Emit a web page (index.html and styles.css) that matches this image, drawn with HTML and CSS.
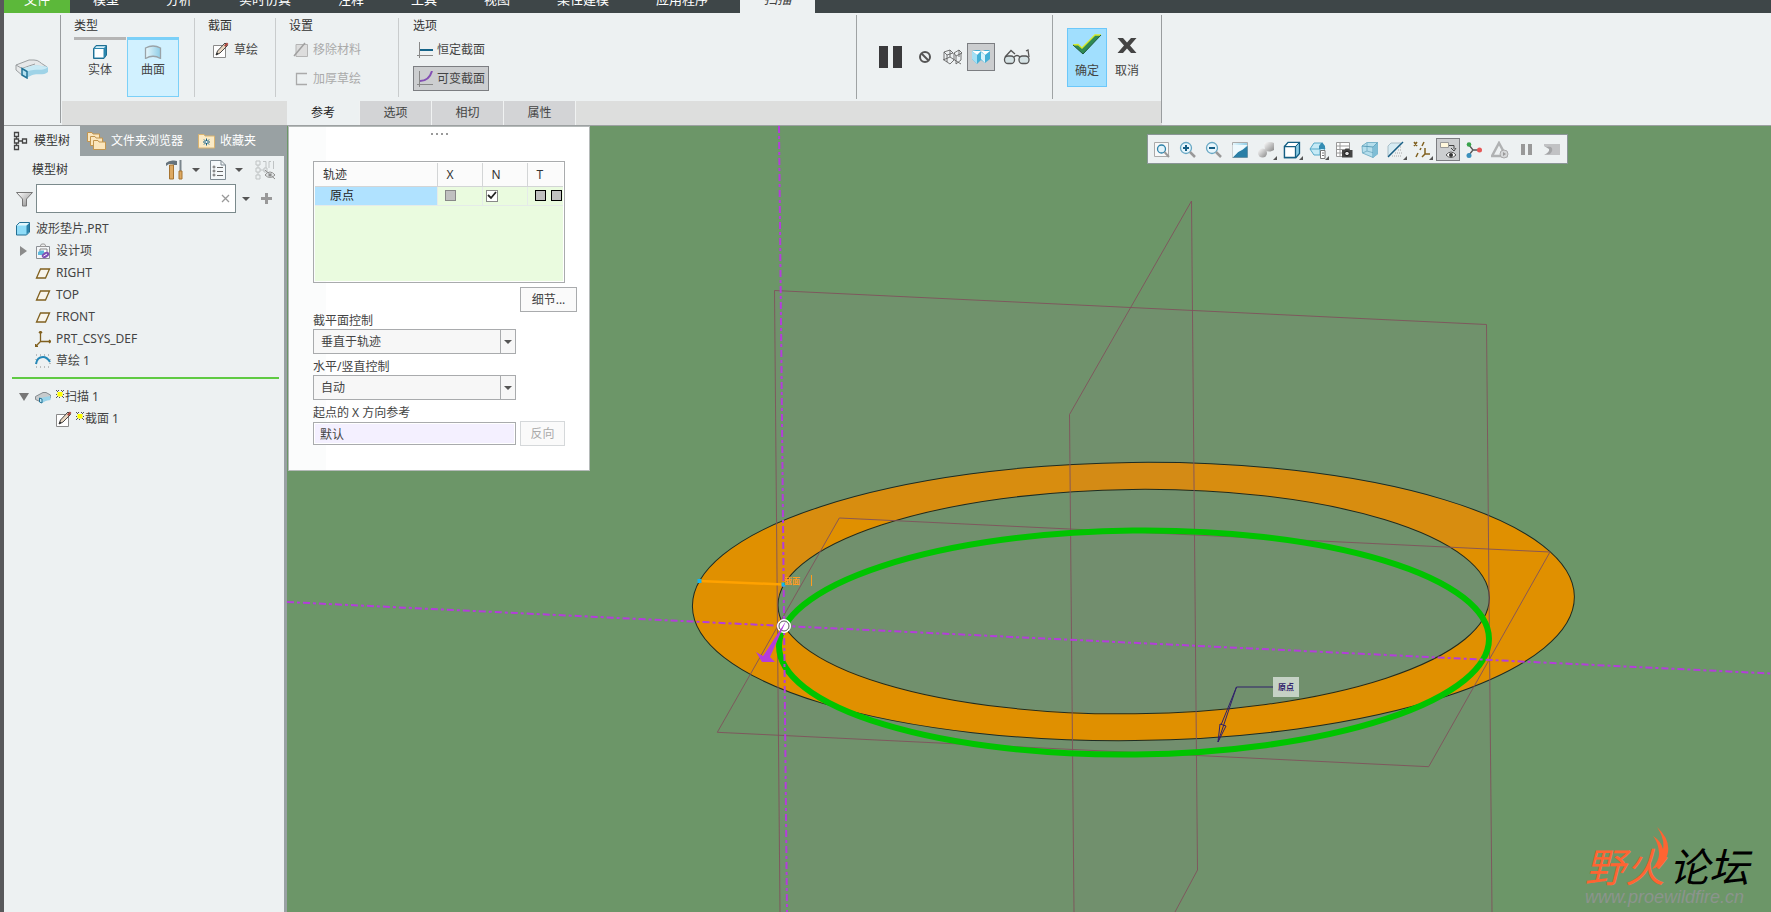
FILE: index.html
```html
<!DOCTYPE html>
<html lang="zh-CN">
  <head>
    <title>波形垫片.PRT</title>
    <meta charset="UTF-8">
    <link rel="stylesheet" href="styles.css">
  </head>
  <body>
    <!-- shared icons -->
    <svg class="defs" width="0" height="0">
      <defs>
        <linearGradient id="blue" x1="0" y1="0" x2="1" y2="0"><stop offset="0" stop-color="#e8f8fd"/><stop offset="1" stop-color="#8fcde6"/></linearGradient>
        <linearGradient id="grey" x1="0" y1="0" x2="1" y2="1"><stop offset="0" stop-color="#fff"/><stop offset="1" stop-color="#888"/></linearGradient>
        <symbol id="plane" viewBox="0 0 16 16"><path d="M5.500 4H14.500L10.500 13H1.500Z" fill="#f8f5ec" stroke="#80601f" stroke-width="1.300"/></symbol>
        <symbol id="sketch" viewBox="0 0 18 18">
          <path d="M1.500 4.500H13.500V16.500H1.500Z" fill="#fff" stroke="#8a8a8a"/>
          <path d="M13 2L15.500 4.500L8 12L4 14L5.500 10Z" fill="#e9d6c0" stroke="#444"/>
          <path d="M13.500 3L15 4.500" stroke="#a8443c" stroke-width="4"/>
          <path d="M4 14L5 11.500L6.500 13Z" fill="#222"/>
        </symbol>
        <symbol id="sweep" viewBox="0 0 34 20">
          <path d="M1 6L14 1H19C24 1 25 4 29 6L32 8L12 12L8 17L1 11Z" fill="#e6e8e9" stroke="#9b9fa1"/>
          <path d="M1 6L7 9.500L14 7L20 5" fill="none" stroke="#9b9fa1"/>
          <path d="M12 11.500L17 8C20 5 27 7 33 8V13C27 18 21 12 12 19Z" fill="#9fd3e7"/>
          <path d="M7 9.500L16 7C20 5 27 7 33 8C28 13 21 9 12 12.500Z" fill="#c9eaf5"/>
          <path d="M7 9.500L12 12.500V19L7 16Z" fill="#b4e0ef" stroke="#237396" stroke-width="1.500"/>
        </symbol>
        <symbol id="sweep-small" viewBox="0 0 16 16">
          <path d="M.500 7.500L8 3.500H11L15.500 6V9L6 13L.500 10.500Z" fill="#c7cbcd" stroke="#868c90"/>
          <path d="M5 9L15.500 7V11Q11 11 7 14L5 13Z" fill="#9ad4ea"/>
          <path d="M4.500 9L7 10V14L4.500 13Z" fill="#c4e9f5" stroke="#237396"/>
        </symbol>
        <symbol id="star" viewBox="0 0 8 8"><path d="M1.500 2H6.500V6.500H1.500Z" fill="#ff0"/><path d="M0 0H1V1H0ZM2 0H3V1H2ZM5 0H6V1H5ZM7 0H8V1H7ZM1 1H2V2H1ZM6 1H7V2H6ZM0 4H1V5H0ZM7 4H8V5H7ZM1 6H2V7H1ZM6 6H7V7H6ZM0 7H1V8H0ZM3 7H4V8H3ZM7 7H8V8H7Z" fill="#555"/></symbol>
        <symbol id="down" viewBox="0 0 8 4"><path d="M0 0H8L4 4Z" fill="#555"/></symbol>
        <symbol id="corner" viewBox="0 0 4 4"><path d="M4 0V4H0Z" fill="#555"/></symbol>
      </defs>
    </svg>

    <nav class="menubar">
      <button class="file">文件</button>
      <div class="menus">
        <button>模型</button>
        <button>分析</button>
        <button>实时仿真</button>
        <button>注释</button>
        <button>工具</button>
        <button>视图</button>
        <button>柔性建模</button>
        <button>应用程序</button>
      </div>
      <button class="current">扫描</button>
    </nav>

    <header class="ribbon">
      <div class="feature"><svg width="34" height="20"><use href="#sweep"/></svg></div>
      <div class="dashboard">
        <div class="groups">
          <section class="group type">
            <h2>类型</h2>
            <div class="big-row">
              <button class="big">
                <svg width="14" height="14"><path d="M.500 3.500L3 .500H13.500V10L11 13.500H.500Z" fill="#2b86ae" stroke="#1f6f93"/><path d="M1.500 4H10.500V12.500H1.500Z" fill="#fff"/><path d="M2 3L3.500 1.200H12.500L11 3Z" fill="#d6f0fa"/></svg>
                实体
              </button>
              <button class="big on">
                <svg width="18" height="14"><path d="M1.500 3Q9 -1 16.500 3V13.500Q9 9 1.500 13.500Z" fill="url(#blue)" stroke="#9aa3a8" stroke-width="1.300"/></svg>
                曲面
              </button>
            </div>
          </section>
          <section class="group section">
            <h2>截面</h2>
            <button class="cmd"><svg width="18" height="18"><use href="#sketch"/></svg>草绘</button>
          </section>
          <section class="group setting">
            <h2>设置</h2>
            <button class="cmd" disabled><svg width="16" height="16"><path d="M3 2.500H14.500V14.500H3Z" fill="#ddd" stroke="#b5b5b5"/><path d="M1 14L12 1" stroke="#a0a0a0" stroke-width="1.500"/></svg>移除材料</button>
            <button class="cmd" disabled><svg width="16" height="16"><path d="M14 2.500H3.500V13.500H14" fill="none" stroke="#aaa" stroke-width="1.300"/></svg>加厚草绘</button>
          </section>
          <section class="group option">
            <h2>选项</h2>
            <button class="cmd"><svg width="16" height="16"><path d="M2.500 0V16M0 13.500H16" stroke="#888"/><path d="M3 8H16" stroke="#156489" stroke-width="2"/></svg>恒定截面</button>
            <button class="cmd on"><svg width="16" height="16"><path d="M2.500 0V16M0 13.500H16" stroke="#888"/><path d="M3 10Q12 10 15 0" fill="none" stroke="#8450b5" stroke-width="2"/></svg>可变截面</button>
          </section>
          <div class="preview">
            <button class="pause" aria-label="暂停"><svg width="23" height="22"><path d="M0 0H9V22H0ZM14 0H23V22H14Z" fill="#3a3a3c"/></svg></button>
            <button class="none" aria-label="无预览"><svg width="12" height="12" fill="none" stroke="#555" stroke-width="2"><circle cx="6" cy="6" r="5"/><path d="M2.500 2.500L9.500 9.500"/></svg></button>
            <button aria-label="分离"><svg width="20" height="16" fill="none" stroke="#555"><path d="M1 3L7 1L10 4L4 6ZM4 6V13L7 15L11 11V4M1 3V11L4 13M11 4L16 1L19 4L13 7ZM13 7V15L18 11V4M0 11L7 8L18 15M7 1V8M16 1V8" stroke-width=".8"/></svg></button>
            <button class="on" aria-label="连接"><svg width="18" height="14"><path d="M0 1L4 0H8L9 2L13 0H17L18 1V9L13 13L9 10L5 14L0 9Z" fill="#45b0d6"/><path d="M0 1H9L5 5ZM9 1H18L13 5Z" fill="#fff"/><path d="M0 1L5 5V14L0 9Z" fill="#a5e0f5"/><path d="M9 2L13 5V13L9 9Z" fill="#d8f3fb"/></svg></button>
            <button class="verify" aria-label="校验"><svg width="28" height="16" fill="#d5e2e4" stroke="#555"><rect x="1.500" y="7" width="10" height="7.500" rx="3.500" stroke-width="1.300"/><rect x="16" y="7" width="10" height="7.500" rx="3.500" stroke-width="1.300"/><path d="M2 8L8 1.500L12 5M11 8Q14 5 17 8M26 8L25 1L23 2" fill="none" stroke-width="1.300"/></svg></button>
          </div>
          <div class="finish">
            <button class="ok"><svg width="30" height="22"><path d="M1 11L6 10.500L10 14L23 1H29L11 20Z" fill="#2f8a55"/><path d="M1 11L6 10.500L10 14L23 1H29" fill="none" stroke="#d6ea2a" stroke-width="1.300"/><path d="M1 11L11 20L29 1" fill="none" stroke="#1c5a3c"/></svg>确定</button>
            <button><svg width="20" height="22"><path d="M.500 4H6L10 8.500L14 4H19.500L13 11.500L19.500 19H14L10 14.500L6 19H.500L7 11.500Z" fill="#444"/></svg>取消</button>
          </div>
        </div>
        <div class="tabs">
          <button class="active">参考</button>
          <button>选项</button>
          <button>相切</button>
          <button>属性</button>
        </div>
      </div>
    </header>

    <main class="work">
      <aside class="navigator">
        <div class="nav-tabs">
          <button class="active"><svg width="15" height="20" fill="none" stroke="#444" stroke-width="1.300"><path d="M1.500 1.500H5.500V5.500H1.500ZM1.500 8H5.500V12H1.500ZM1.500 14.500H5.500V18.500H1.500ZM9.500 8H13.500V12H9.500ZM3.500 5.500V8M3.500 12V14.500M5.500 10H9.500"/></svg>模型树</button>
          <button><svg width="20" height="20" fill="#fbe6bd" stroke="#c2954f"><path d="M.500 1.500H5L6 3H12.500V10.500H.500Z"/><path d="M3.500 5.500H8L9 7H15.500V14.500H3.500Z"/><path d="M6.500 9.500H11L12 11H18.500V18.500H6.500Z"/></svg>文件夹浏览器</button>
          <button><svg width="18" height="16"><path d="M.500 1.500H6L7 3H16.500V15H.500Z" fill="#fbeac5" stroke="#d9b370"/><path d="M8.500 5.500V12.500M5 9H12M6 6.500L11 11.500M11 6.500L6 11.500" stroke="#0f5d86"/><circle cx="8.500" cy="9" r="1" fill="#fff"/></svg>收藏夹</button>
        </div>
        <div class="tree-head">
          <h2>模型树</h2>
          <button aria-label="设置"><svg width="18" height="20"><path d="M0 3Q3 0 8 .500L11 1V5H8L6 4H3L0 6Z" fill="#66737c"/><path d="M3.500 5H7.500V19H3.500Z" fill="#dda962" stroke="#a77431"/><path d="M14.500 0V11" stroke="#7a858c" stroke-width="2"/><path d="M13 11H16V19H13Z" fill="#dda962" stroke="#a77431"/></svg><svg width="8" height="4"><use href="#down"/></svg></button>
          <button aria-label="显示"><svg width="17" height="20"><path d="M.500 .500H11L15.500 5V19.500H.500Z" fill="#f4f8fa" stroke="#7e8a92"/><path d="M11 .500V5H15.500" fill="none" stroke="#7e8a92"/><g fill="none" stroke="#666"><circle cx="4" cy="7" r="1"/><circle cx="4" cy="11" r="1"/><circle cx="4" cy="15" r="1"/><path d="M7 7.500H13M7 11.500H13M7 15.500H13"/></g></svg><svg width="8" height="4"><use href="#down"/></svg></button>
          <button aria-label="隐藏" disabled><svg width="21" height="20" fill="none" stroke="#bfc3c4"><path d="M1 1H5V5H1ZM1 8H5V12H1ZM1 15H5V19H1ZM3 5V8M3 12V15M5 10H9M9 8H12V12H9ZM8 1.500H11V8M14 1.500V8M18.500 1V9M14 1.500H16"/><path d="M10 15Q15 9 20 15Q15 20 10 15ZM10 10L20 19" stroke="#8c8c8c"/><circle cx="15" cy="15" r="2" fill="#8c8c8c"/></svg></button>
        </div>
        <div class="filter">
          <svg width="17" height="16"><path d="M.500 1.500H16.500L10.500 8V15H6.500V8Z" fill="url(#grey)" stroke="#777"/></svg>
          <div class="search">
            <input type="text" aria-label="过滤">
            <button aria-label="清除"><svg width="9" height="9"><path d="M1 1L8 8M8 1L1 8" stroke="#999" stroke-width="1.300"/></svg></button>
          </div>
          <svg width="8" height="4"><use href="#down"/></svg>
          <button aria-label="添加"><svg width="11" height="11"><path d="M5.500 0V11M0 5.500H11" stroke="#999" stroke-width="3"/></svg></button>
        </div>
        <ul class="tree">
          <li><svg width="14" height="14"><path d="M.500 3.500L3.500 .500H13.500V10L10.500 13H.500Z" fill="#8fdcf8" stroke="#236f94"/><path d="M10.500 3.500L13 1V10L10.500 12.500Z" fill="#2d83ab"/><path d="M1 3.500L4 1H13L10.500 3.500Z" fill="#e2f7fd"/></svg>波形垫片.PRT</li>
          <li class="sub"><svg class="arrow" width="9" height="10"><path d="M1 0L8 5L1 10Z" fill="#8b8b8b"/></svg><svg width="16" height="16"><path d="M1.500 3.500H14.500V15.500H1.500Z" fill="#f4f6f8" stroke="#8b8f94"/><path d="M5 3.500L6.500 1H9.500L11 3.500Z" fill="#eee" stroke="#999"/><path d="M5 6H12V10H5Z" fill="#fff" stroke="#888"/><path d="M3 9L6 7.500H9V12H3Z" fill="#5db9dd"/><ellipse cx="10.500" cy="12" rx="4" ry="2.500" fill="#7e4fb5" transform="rotate(-30 10.500 12)"/><path d="M8.500 13L12 11" stroke="#fff"/></svg>设计项</li>
          <li class="sub"><svg width="16" height="16"><use href="#plane"/></svg>RIGHT</li>
          <li class="sub"><svg width="16" height="16"><use href="#plane"/></svg>TOP</li>
          <li class="sub"><svg width="16" height="16"><use href="#plane"/></svg>FRONT</li>
          <li class="sub"><svg width="16" height="16" fill="none" stroke="#80601f" stroke-width="1.300"><path d="M5.500 0V10.500H16M5.500 10.500L.500 15.500M4 2L5.500 0L7 2M14 9L16 10.500L14 12M.500 13V15.500H3"/></svg>PRT_CSYS_DEF</li>
          <li class="sub"><svg width="16" height="16" fill="none"><path d="M1 2H15M1 14H15M1 6V12M15 6V12" stroke="#888" stroke-dasharray="1 3"/><path d="M1 11Q2 4 8 4Q12 4 15 9" stroke="#2488b8" stroke-width="2"/></svg>草绘 1</li>
          <li class="insert"></li>
          <li class="sub"><svg class="arrow" width="10" height="8"><path d="M0 0H10L5 8Z" fill="#777"/></svg><svg width="16" height="16"><use href="#sweep-small"/></svg><span class="new"><svg width="8" height="8"><use href="#star"/></svg>扫描 1</span></li>
          <li class="leaf"><svg width="18" height="18"><use href="#sketch"/></svg><span class="new"><svg width="8" height="8"><use href="#star"/></svg>截面 1</span></li>
        </ul>
      </aside>

      <div class="canvas">
        <svg class="scene" viewBox="287 126 1484 786" preserveAspectRatio="xMidYMid slice">
          <defs>
            <clipPath id="near"><path d="M839 518L1550 552H1600V800H690V620H782Z"/></clipPath>
          </defs>
          <rect x="287" y="126" width="1484" height="786" fill="#6c9668"/>
          <g id="washer">
            <path fill="#e09000" stroke="none" fill-rule="evenodd" d="M692.400 606.500A441 139 -.65 0 1 1574.400 596.500A441 139 -.65 0 1 692.400 606.500ZM778 605.500A355.700 112 -.63 0 1 1489.400 597.700A355.700 112 -.63 0 1 778 605.500Z"/>
          </g>
          <g fill="#907890" fill-opacity=".1">
            <path d="M774.500 290.500L1486.500 324.500L1492 912H780Z"/>
            <path d="M1191.500 201L1069.500 414.500L1074 912H1175L1197.500 870Z" fill-opacity=".05"/>
            <path d="M839.300 518L1550 552L1428.700 766.700L717.300 732.300Z" fill-opacity=".05"/>
          </g>
          <use href="#washer" clip-path="url(#near)"/>
          <g fill="none" stroke="#1d2b22">
            <ellipse cx="1133.400" cy="601.500" rx="441" ry="139.100" transform="rotate(-.65 1133.400 601.500)"/>
            <ellipse cx="1133.700" cy="601.600" rx="355.700" ry="112.200" transform="rotate(-.63 1133.700 601.600)"/>
          </g>
          <g fill="none" stroke="#80525c" stroke-opacity=".9">
            <path d="M780 912L774.500 290.500L1486.500 324.500L1492 912"/>
            <path d="M1074 912L1069.500 414.500L1191.500 201L1197.500 870L1175 912"/>
            <path d="M839.300 518L1550 552L1428.700 766.700L717.300 732.300Z"/>
          </g>
          <ellipse cx="1134" cy="642.500" rx="355" ry="112" transform="rotate(-.63 1134 642.500)" fill="none" stroke="#00c400" stroke-width="6"/>
          <g stroke="#b43ddb" stroke-width="2" stroke-dasharray="7 3 3 3">
            <path d="M779 126L787 912"/>
            <path d="M287 602L1771 673.500"/>
          </g>
          <path d="M699.500 581L783.500 584.500" stroke="#ffa200" stroke-width="2.500"/>
          <path d="M697.500 579H701.500V583H697.500ZM781.500 582.500H785.500V586.500H781.500Z" fill="#16b4ee"/>
          <text class="tag section-tag" x="784" y="584">截面</text>
          <path d="M811.500 575V586" stroke="#ff9c1e"/>
          <circle cx="784" cy="626" r="6.500" fill="#fff" stroke="#fff"/>
          <circle cx="784" cy="626" r="5" fill="#fff" stroke="#555"/>
          <path d="M786 621L770 657L775 662L762 662L756 652L763 656Z" fill="#b43ddb"/>
          <path d="M1273 687H1236.500L1221 725M1218 742L1220 724L1226 726ZM1236.500 687L1218 742" fill="none" stroke="#30206a"/>
          <rect x="1273" y="677" width="26" height="20" fill="#c5d2c5"/>
          <text class="tag origin-tag" x="1278" y="690">原点</text>
        </svg>

        <form class="slide-panel">
          <div class="grip"><i></i><i></i><i></i><i></i></div>
          <div class="list">
            <table>
              <colgroup><col class="c-name"><col class="c-x"><col class="c-n"><col class="c-t"></colgroup>
              <tr><th>轨迹</th><th>X</th><th>N</th><th>T</th></tr>
              <tr>
                <td class="picked">原点</td>
                <td><input type="checkbox" class="off" aria-label="X" disabled></td>
                <td><label class="tick"><input type="checkbox" aria-label="N" checked><svg width="10" height="9"><path d="M1 4L4 7L9 1" fill="none" stroke="#222" stroke-width="1.800"/></svg></label></td>
                <td><input type="checkbox" class="dark" aria-label="T 1" disabled><input type="checkbox" class="dark" aria-label="T 2" disabled></td>
              </tr>
            </table>
          </div>
          <div class="row end"><button type="button" class="details">细节...</button></div>
          <label for="plane-control">截平面控制</label>
          <div class="select"><select id="plane-control"><option>垂直于轨迹</option></select></div>
          <label for="vertical-control">水平/竖直控制</label>
          <div class="select"><select id="vertical-control"><option>自动</option></select></div>
          <label for="x-direction">起点的 X 方向参考</label>
          <div class="row"><input id="x-direction" type="text" value="默认"><button type="button" disabled>反向</button></div>
        </form>

        <div class="viewbar">
          <button aria-label="重新调整"><svg width="18" height="18"><path d="M1.500 1.500H15.500V15.500H1.500Z" fill="#f8f8f8" stroke="#aaa"/><circle cx="8.500" cy="8" r="4" fill="#e3f3fa" stroke="#2f83aa" stroke-width="1.300"/><path d="M11.500 11L16 16" stroke="#999" stroke-width="2"/></svg></button>
          <button aria-label="放大"><svg width="18" height="18"><circle cx="7" cy="7" r="5.500" fill="#e8f6fc" stroke="#68a8c4" stroke-width="1.300"/><path d="M7 4V10M4 7H10" stroke="#165f86" stroke-width="2"/><path d="M11 11L16 16" stroke="#999" stroke-width="2.500"/></svg></button>
          <button aria-label="缩小"><svg width="18" height="18"><circle cx="7" cy="7" r="5.500" fill="#e8f6fc" stroke="#68a8c4" stroke-width="1.300"/><path d="M4 7H10" stroke="#165f86" stroke-width="2"/><path d="M11 11L16 16" stroke="#999" stroke-width="2.500"/></svg></button>
          <button aria-label="重画"><svg width="18" height="18"><path d="M1.500 1.500H16.500V16.500H1.500Z" fill="url(#blue)" stroke="#aaa"/><path d="M1.500 16.500L7 11Q12 9 16.500 5V16.500Z" fill="#2b7fa6"/><path d="M1.500 4V16.500L7 11Q12 9 16.500 4Z" fill="#eef9fd"/></svg></button>
          <button aria-label="渲染"><svg width="18" height="18"><path d="M7 2Q12 0 17 2V9Q12 12 8 9Z" fill="url(#grey)"/><circle cx="5.500" cy="12" r="4.500" fill="url(#grey)"/></svg><svg class="more" width="4" height="4"><use href="#corner"/></svg></button>
          <button aria-label="显示样式"><svg width="18" height="18"><path d="M1.500 5.500L5 1.500H16.500V12.500L13 16.500H1.500Z" fill="#8bcde6" stroke="#155f84" stroke-width="1.300"/><path d="M1.500 5.500H12.500V16.500H1.500Z" fill="#fff" stroke="#155f84" stroke-width="1.300"/><path d="M3 5L5.500 2H15L12.500 5Z" fill="#fff"/><path d="M12.500 5.500L16.500 1.500" stroke="#155f84"/></svg><svg class="more" width="4" height="4"><use href="#corner"/></svg></button>
          <button aria-label="已保存方向"><svg width="18" height="18"><path d="M1 8L5 2H12L16 7L13 14H5Z" fill="#c6eaf6" stroke="#57a9c8"/><path d="M1 8H11V14" fill="none" stroke="#57a9c8"/><path d="M10 8V5L13 1L16 5V8Z" fill="#348cb3"/><path d="M11.500 9.500H16V17.500H11.500Z" fill="#fff" stroke="#777"/><path d="M13 12H15M13 14.500H15" stroke="#777"/></svg><svg class="more" width="4" height="4"><use href="#corner"/></svg></button>
          <button aria-label="视图管理器"><svg width="18" height="18"><path d="M1.500 1.500H14.500V15.500H1.500ZM1.500 5H14.500M1.500 8.500H14.500M1.500 12H14.500M5 1.500V15.500" fill="#fff" stroke="#999"/><path d="M7 9H9.500L10.500 7.500H14L15 9H17.500V16.500H7Z" fill="#444"/><circle cx="12" cy="12.500" r="2.300" fill="#ddd" stroke="#111"/></svg></button>
          <button aria-label="透视图"><svg width="18" height="18"><path d="M1 5L6 1.500H16.500V13L12 16.500L1.500 12Z" fill="#b5deec" stroke="#7bb4ca"/><path d="M6 1.500V10L1.500 12M6 10L16.500 13" fill="none" stroke="#7bb4ca"/><path d="M1 5L12 6L16.500 1.500M12 6V16.500" fill="none" stroke="#5c9fba"/><path d="M12 6L16.500 2V13L12 16.500Z" fill="#7fbdd5"/></svg></button>
          <button aria-label="截面"><svg width="18" height="18"><path d="M1 5L4 2H14L1 15Z" fill="#d6ebf3" stroke="#a8bec8"/><path d="M1 16L16 1" stroke="#175f86" stroke-width="1.500"/><path d="M5 15H15M8 12H15M11 9H15M13 6H15" stroke="#aaa" stroke-dasharray="1 1"/></svg><svg class="more" width="4" height="4"><use href="#corner"/></svg></button>
          <button aria-label="基准显示"><svg width="18" height="18" fill="none" stroke="#80601f" stroke-width="1.500"><path d="M1 1L4 5M4 1L1 5M11 1L9 5M8 7L7 9M5 12L3 16M12 7V13H17M12 13L9 16"/></svg><svg class="more" width="4" height="4"><use href="#corner"/></svg></button>
          <button class="on" aria-label="注释显示"><svg width="18" height="18"><path d="M1.500 1.500H9.500V6.500H1.500Z" fill="#fff7dc" stroke="#999"/><path d="M10 4.500H15V8M12 7L15 10L17 7" fill="none" stroke="#444"/><path d="M7 14Q12 8 17 14Q12 19 7 14Z" fill="#fff" stroke="#555"/><circle cx="12" cy="14" r="2" fill="#333"/></svg></button>
          <button aria-label="旋转中心"><svg width="18" height="18"><path d="M4 4L8 9L4 14M8 9H14" fill="none" stroke="#555" stroke-width="1.300"/><circle cx="4" cy="3.500" r="2.300" fill="#39a34c"/><circle cx="4" cy="14.500" r="2.500" fill="#3b91bd"/><circle cx="14.500" cy="9" r="2.500" fill="#e65757"/></svg></button>
          <button aria-label="模拟" disabled><svg width="18" height="18"><path d="M8 2L15 15H1Z" fill="none" stroke="#b0b2b3" stroke-width="2.500"/><circle cx="13" cy="13" r="4" fill="#d5d7d8" stroke="#aaa"/><path d="M12 11L15 13L12 15Z" fill="#999"/></svg></button>
          <button aria-label="暂停模拟" disabled><svg width="18" height="18"><path d="M4 3H8V14H4ZM11 3H15V14H11Z" fill="#999"/></svg></button>
          <button aria-label="动画" disabled><svg width="18" height="18"><path d="M1 3H17V14H2Q7 13 8 9Q7 5 1 5Z" fill="#c1c2c4"/><path d="M1 5L8 6Q11 9 7 13L1 14Q7 11 6 8Z" fill="#a4a5a7"/></svg></button>
        </div>

        <div class="watermark">
          <p class="brand"><span>野火</span>论坛</p>
          <svg class="flame" width="18" height="42"><path d="M6 0Q19 12 17 25Q15 38 1 42Q9 33 8 25Q7 15 2 9Q10 14 12 22Q14 12 6 0Z" fill="#ff6432"/></svg>
          <p class="site">www.proewildfire.cn</p>
        </div>
      </div>
    </main>
  </body>
</html>
```
FILE: styles.css
```css
*
{
  box-sizing: border-box;
}
body
{
  margin: 0;
  min-height: 100vh;
  display: flex;
  flex-direction: column;
  border-left: 4px solid #58595b;
  background-color: #edf1f2;
  color: #444;
  font-family: "Noto Sans", "Noto Sans CJK SC", sans-serif;
  font-size: 12px;
  line-height: 18px;
}
button, input, select
{
  font: inherit;
  color: inherit;
  margin: 0;
}
button
{
  border: 0;
  padding: 0;
  background: none;
}
h2, p
{
  margin: 0;
  font-size: 12px;
  font-weight: normal;
}
svg {display: block; flex-shrink: 0;}
.defs {position: absolute;}

/* menu bar, partly scrolled off the top */
.menubar
{
  display: flex;
  align-items: flex-end;
  height: 13px;
  overflow: hidden;
  background-color: #3e4648;
  color: #fff;
  font-size: 13px;
}
.menubar button {height: 24px; padding-bottom: 5px; white-space: nowrap;}
.menubar .file {width: 66px; background-color: #5cb83a;}
.menus {display: flex; gap: 47px; padding: 0 32px 0 23px;}
.menubar .current
{
  width: 75px;
  background-color: #edf1f2;
  color: #444;
  font-size: 14px;
  font-style: italic;
}

/* ribbon */
.ribbon
{
  display: flex;
  height: 113px;
  border-bottom: 1px solid #9da1a2;
}
.feature
{
  width: 57px;
  margin: 2px 1px 2px 0;
  border-right: 1px solid #999d9f;
  display: flex;
  align-items: center;
  justify-content: center;
}
.dashboard
{
  flex: 0 1 1100px;
  display: flex;
  flex-direction: column;
  position: relative;
}
.dashboard::after
{
  content: "";
  position: absolute;
  right: 0;
  top: 2px;
  bottom: 2px;
  border-right: 1px solid #999d9f;
}
.groups {display: flex; flex: 1; padding-left: 12px;}
.group
{
  margin: 5px 0 4px;
  border-right: 1px solid #c9cccd;
  padding-left: 13px;
}
.group h2 {line-height: 15px; color: #333;}
.type {width: 121px; padding-left: 0;}
.section {width: 81px;}
.setting {width: 123px;}
.option {flex: 1; padding-left: 14px; border: 0;}
.big-row {display: flex; gap: 1px; margin-top: 4px;}
.big
{
  width: 52px;
  height: 60px;
  border-top: 3px solid #b5b5b5;
  padding-top: 5px;
  display: flex;
  flex-direction: column;
  align-items: center;
  justify-content: flex-start;
  gap: 2px;
}
.big.on
{
  background-color: #d1f1ff;
  border: 1px solid #7bd0f8;
  border-top-width: 3px;
}
.cmd
{
  display: flex;
  align-items: center;
  gap: 4px;
  height: 25px;
  margin-top: 4px;
  border: 1px solid transparent;
  padding: 0 3px;
  white-space: nowrap;
}
.cmd:disabled {color: #aaa;}
.cmd.on {background-color: #ccced0; border-color: #7c7e82;}
.preview, .finish
{
  display: flex;
  align-items: center;
  margin: 2px 0;
  border-left: 1px solid #9fa3a4;
}
.preview {width: 196px; padding: 0 0 0 22px; gap: 4px;}
.preview button
{
  display: flex;
  align-items: center;
  justify-content: center;
}
.preview .pause {margin-right: 13px;}
.preview .none {margin-right: 8px;}
.preview .on
{
  width: 28px;
  height: 28px;
  border: 1px solid #7c7e82;
  background-color: #cbcdcf;
}
.preview .verify {margin-left: 4px;}
.finish {width: 110px; padding-left: 14px;}
.finish button
{
  width: 40px;
  height: 59px;
  border: 1px solid transparent;
  display: flex;
  flex-direction: column;
  align-items: center;
  justify-content: center;
  gap: 6px;
}
.finish .ok {background-color: #a1dffe; border-color: #6cc8fa;}
.tabs
{
  display: flex;
  gap: 1px;
  height: 24px;
  padding-left: 225px;
  background-color: #dddedd;
}
.tabs button {width: 71px; background-color: #d3d4d6; box-shadow: 1px 0 #f0f2f2;}
.tabs .active {width: 72px; background-color: #edf1f2; color: #222;}

/* navigator */
.work {display: flex; flex: 1;}
.navigator
{
  width: 283px;
  flex-shrink: 0;
  border-right: 3px solid #99a1a3;
}
.nav-tabs {display: flex; background-color: #99a1a3; color: #fff;}
.nav-tabs button
{
  display: flex;
  align-items: center;
  gap: 4px;
  height: 30px;
  padding: 0 8px 0 7px;
}
.nav-tabs .active
{
  width: 76px;
  padding-left: 9px;
  gap: 6px;
  background-color: #edf1f2;
  color: #333;
}
.tree-head
{
  display: flex;
  align-items: center;
  height: 28px;
  padding: 0 8px 0 28px;
}
.tree-head h2 {flex: 1; color: #333;}
.tree-head button {display: flex; align-items: center; gap: 8px; margin-right: 10px;}
.tree-head button:last-child {margin: 0 0 0 2px;}
.filter {display: flex; align-items: center; padding-left: 12px;}
.search
{
  width: 200px;
  height: 29px;
  margin: 0 6px 0 3px;
  border: 1px solid #7b8a8c;
  background-color: #fff;
  display: flex;
  align-items: center;
  padding-right: 5px;
}
.search input {flex: 1; min-width: 0; border: 0; outline: 0;}
.filter > button {margin-left: 11px;}
.tree {list-style: none; margin: 5px 0 0; padding: 0;}
.tree li
{
  display: flex;
  align-items: center;
  gap: 6px;
  height: 22px;
  padding-left: 12px;
  white-space: nowrap;
}
.tree .sub {padding-left: 31px; gap: 5px; position: relative;}
.tree .leaf {padding-left: 51px; gap: 3px;}
.tree .arrow {position: absolute; left: 15px;}
.tree .insert
{
  height: 2px;
  margin: 5px 5px 7px 8px;
  background-color: #5fca43;
}
.new {display: flex; gap: 1px;}
.new svg {margin-top: 2px;}

/* graphics area */
.canvas {flex: 1; min-width: 0; position: relative; overflow: hidden; background-color: #6c9668;}
.scene {position: absolute; width: 100%; height: 100%;}
.tag {font-size: 8px; font-weight: bold; font-family: "Noto Sans CJK SC", sans-serif;}
.section-tag {fill: #ff9c1e;}
.origin-tag {fill: #30206a;}

.slide-panel
{
  position: absolute;
  left: 1px;
  top: 0;
  width: 302px;
  height: 345px;
  border: 1px solid #b5bab9;
  padding: 0 12px 0 24px;
  background: linear-gradient(90deg, #fbfcfc 37px, #fff 37px);
}
.grip {display: flex; gap: 3px; justify-content: center; padding: 6px 12px 26px 0;}
.grip i {width: 2px; height: 2px; background-color: #999;}
.list
{
  width: 252px;
  height: 122px;
  border: 1px solid #a9abad;
  padding: 1px;
  background: #eafbdf content-box;
}
table {width: 100%; table-layout: fixed; border-collapse: collapse;}
.c-name {width: 122px;}
.c-x, .c-n {width: 45px;}
th
{
  height: 23px;
  padding: 2px 0 0 9px;
  border-right: 1px solid #d3d5d6;
  border-bottom: 1px solid #d3d5d6;
  background-color: #fbfbfb;
  font-weight: normal;
  text-align: left;
  color: #333;
}
th:first-child {padding-left: 8px;}
th:last-child, td:last-child {border-right: 0;}
td
{
  height: 19px;
  padding: 0 0 0 7px;
  border-right: 1px solid #e5ebe9;
  border-bottom: 1px solid #e5ebe9;
  line-height: 0;
  white-space: nowrap;
}
td:nth-child(3) {padding-left: 3px;}
.picked {padding-left: 15px; background-color: #b0e2ff; line-height: 18px; color: #222;}
td input
{
  appearance: none;
  width: 11px;
  height: 11px;
  border: 1px solid #888;
  background-color: #c0c0c0;
}
td .dark {border-color: #000; margin-right: 5px;}
td .dark:last-child {margin-right: 0;}
.tick {display: grid; width: 12px;}
.tick > * {grid-area: 1 / 1; place-self: center;}
.tick input {width: 12px; height: 12px; background-color: #fff;}
.row {display: flex; gap: 4px; align-items: center;}
.end {justify-content: flex-end; margin: 4px 0 0;}
.slide-panel button
{
  width: 45px;
  height: 25px;
  border: 1px solid #a9abad;
  background-color: #fafafa;
}
.slide-panel .details {width: 57px;}
.slide-panel button:disabled {color: #aaa; border-color: #d5d8da;}
.slide-panel > label {display: block; height: 17px; line-height: 17px;}
.slide-panel > .select {margin-bottom: 4px;}
.select {position: relative; width: 203px;}
.select::after
{
  content: "";
  position: absolute;
  right: 4px;
  top: 11px;
  border: 4px solid transparent;
  border-top-color: #555;
  border-bottom: 0;
  pointer-events: none;
}
select
{
  appearance: none;
  display: block;
  width: 203px;
  height: 25px;
  border: 1px solid #a9abad;
  border-radius: 0;
  padding: 0 7px;
  background: linear-gradient(90deg, transparent 186px, #a9abad 186px, #a9abad 187px, transparent 187px) #f7f7f7;
}
#x-direction
{
  width: 203px;
  height: 23px;
  border: 1px solid #a9abad;
  padding: 0 6px;
  background-color: #f4f0ff;
  box-shadow: inset 0 0 0 1px #fff;
}

.viewbar
{
  position: absolute;
  top: 8px;
  right: 203px;
  display: flex;
  gap: 2px;
  height: 30px;
  border: 1px solid #8a9696;
  padding: 3px 3px 2px 2px;
  background-color: #edf1f2;
}
.viewbar button
{
  width: 24px;
  height: 23px;
  border: 1px solid transparent;
  padding: 2px;
  position: relative;
}
.viewbar .on {background-color: #ccced0; border-color: #7c7e82;}
.more {position: absolute; right: 0; bottom: 0;}

.watermark {position: absolute; right: 18px; bottom: 5px; width: 168px;}
.brand
{
  font-family: "Noto Sans CJK SC", sans-serif;
  font-size: 40px;
  font-style: italic;
  line-height: 44px;
  color: #000;
}
.brand span {color: #ff6432; margin-right: 4px;}
.flame {position: absolute; right: 84px; top: -16px;}
.site
{
  font-family: "Liberation Sans", sans-serif;
  font-size: 18px;
  font-style: italic;
  line-height: 20px;
  color: #8b948d;
}
```
